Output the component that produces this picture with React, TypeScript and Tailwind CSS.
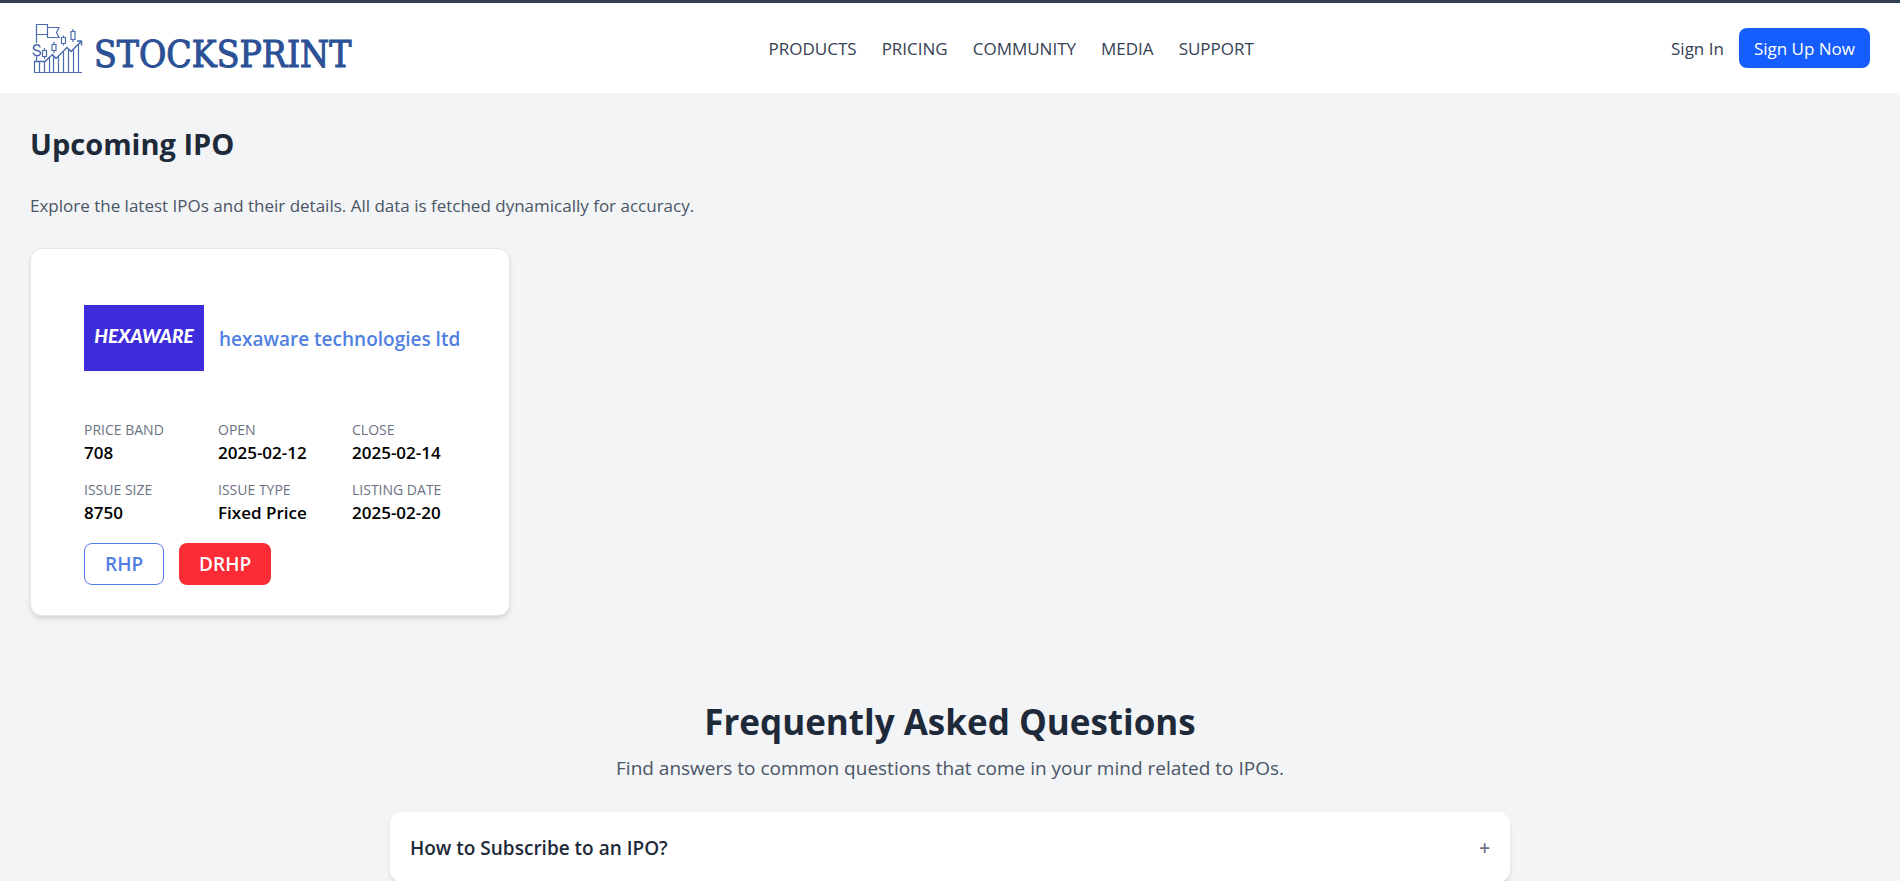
import { useState } from "react";

const navItems = ["PRODUCTS", "PRICING", "COMMUNITY", "MEDIA", "SUPPORT"];

const details = [
  { label: "PRICE BAND", value: "708" },
  { label: "OPEN", value: "2025-02-12" },
  { label: "CLOSE", value: "2025-02-14" },
  { label: "ISSUE SIZE", value: "8750" },
  { label: "ISSUE TYPE", value: "Fixed Price" },
  { label: "LISTING DATE", value: "2025-02-20" },
];

function LogoMark() {
  return (
    <svg
      viewBox="0 0 52 52"
      className="h-[52px] w-[52px] shrink-0"
      fill="none"
      stroke="#4a6cab"
      strokeWidth="1.2"
      aria-hidden="true"
    >
      <path d="M4.500 21V2.500H15.500V12.500H4.500M4.500 34.500v5" />
      <path d="M15.500 5.500H27L24.500 10.500L27 15.500H15.500V12.500" />
      <path d="M8 25.500C7.500 21.500 1.500 22 1.500 26C1.500 29.500 8.500 27.500 8.500 31C8.500 35 1.500 34.500 1.200 30.500" strokeWidth="1.5" />
      <path d="M2 39.500H13L20.500 32.500L24 36.500L35 25.500L39 29.500L49 19.500M45 19H49.500V23.500" strokeWidth="1.5" />
      <path d="M2.500 39.500V50.500H50M7.500 39.500V50.500M12.500 39.500V50.500M17.500 36V50.500M21.500 34V50.500M26.500 34V50.500M31.500 30V50.500M36.500 27V50.500M41.500 27.500V50.500M46.500 22.500V50.500" />
      <path d="M10.500 28.500h4v6h-4zM12.500 26v2.500M12.500 34.500v2.500M20 22.500h4v6h-4zM22 20v2.500M22 28.500v2.500M29.500 15.500h4v6h-4zM31.500 13.500v2M31.500 21.500v2M39 9.500h4v8h-4zM41 7v2.500M41 17.500v2.500" />
    </svg>
  );
}

function Header() {
  return (
    <header className="flex h-[93px] items-center justify-between border-t-3 border-[#334150] bg-white px-[30px]">
      <a href="#home" className="flex items-center gap-[10px] pl-[2px]">
        <LogoMark />
        <span className="pt-3 font-['DejaVu_Serif_Condensed','DejaVu_Serif',serif] text-[37px] leading-none text-[#2b5096] [-webkit-text-stroke:1px_#2b5096]">
          STOCKSPRINT
        </span>
      </a>
      <nav className="flex gap-[25px] pt-[2px] text-[17px] text-[#364153]">
        {navItems.map((item) => (
          <a key={item} href={`#${item.toLowerCase()}`}>
            {item}
          </a>
        ))}
      </nav>
      <div className="flex items-center gap-[15px] text-[17px]">
        <a href="#signin" className="pt-[2px] text-[#364153]">
          Sign In
        </a>
        <button type="button" className="h-10 rounded-lg bg-[#155dfc] px-[15px] pt-[2px] text-white">
          Sign Up Now
        </button>
      </div>
    </header>
  );
}

function IpoCard() {
  return (
    <article className="w-[480px] rounded-xl border border-gray-200 bg-white px-[53px] pt-14 pb-[30px] shadow-md">
      <div className="flex items-center gap-[15px]">
        <div className="flex h-[66px] w-[120px] shrink-0 items-center justify-center bg-[#3c2cda] pb-1 font-['Lato',sans-serif] text-[19px] font-black text-white italic">
          HEXAWARE
        </div>
        <h2 className="pt-[2px] text-[19px] font-semibold whitespace-nowrap text-[#4f80e1]">
          hexaware technologies ltd
        </h2>
      </div>
      <dl className="mt-12 grid grid-cols-[134px_134px_auto] gap-y-[14px]">
        {details.map(({ label, value }) => (
          <div key={label}>
            <dt className="text-[14px] leading-[22px] text-[#6a7282]">{label}</dt>
            <dd className="text-[17px] leading-6 font-semibold text-black">{value}</dd>
          </div>
        ))}
      </dl>
      <div className="mt-[18px] flex gap-[15px] text-[19px] font-semibold">
        <button type="button" className="h-[42px] rounded-lg border border-[#4f80e1] px-5 text-[#4f80e1]">
          RHP
        </button>
        <button type="button" className="h-[42px] rounded-lg bg-[#fb2c36] px-5 text-white">
          DRHP
        </button>
      </div>
    </article>
  );
}

function Faq() {
  const [open, setOpen] = useState(false);
  return (
    <section className="mx-auto mt-20 max-w-[1120px]">
      <h2 className="text-center text-[35px] leading-[52px] font-bold text-[#1e2939]">
        Frequently Asked Questions
      </h2>
      <p className="mt-[6px] text-center text-[19px] leading-7 text-[#4a5565]">
        Find answers to common questions that come in your mind related to IPOs.
      </p>
      <div className="mt-[30px] rounded-xl bg-white shadow-md">
        <button
          type="button"
          aria-expanded={open}
          onClick={() => setOpen(!open)}
          className="flex h-[70px] w-full items-center justify-between px-5 pt-[2px] text-left"
        >
          <span className="text-[19px] font-semibold text-[#1e2939]">How to Subscribe to an IPO?</span>
          <span className="text-[19px] font-semibold text-[#6a7282]">{open ? "−" : "+"}</span>
        </button>
      </div>
    </section>
  );
}

export default function App() {
  return (
    <div className="min-h-screen bg-[#f3f4f6] font-['Open_Sans','Noto_Sans',sans-serif]">
      <Header />
      <main className="px-[30px] pt-[29px]">
        <h1 className="text-[29px] leading-[44px] font-bold text-[#1e2939]">Upcoming IPO</h1>
        <p className="mt-[26px] mb-[28px] text-[17px] leading-7 text-[#4a5565]">
          Explore the latest IPOs and their details. All data is fetched dynamically for accuracy.
        </p>
        <IpoCard />
        <Faq />
      </main>
    </div>
  );
}
